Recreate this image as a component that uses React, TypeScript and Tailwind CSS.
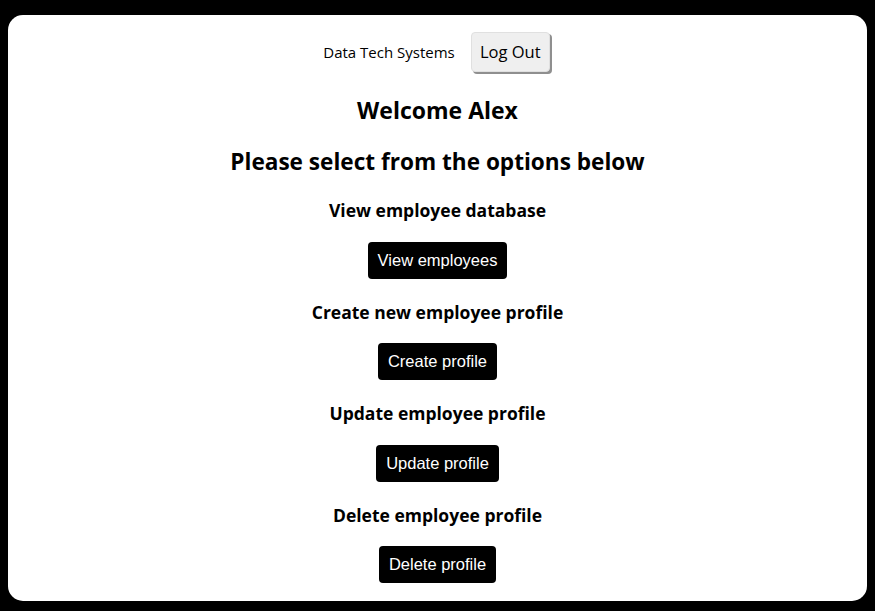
export default function App() {
  const options = [
    { title: 'View employee database', label: 'View employees' },
    { title: 'Create new employee profile', label: 'Create profile' },
    { title: 'Update employee profile', label: 'Update profile' },
    { title: 'Delete employee profile', label: 'Delete profile' },
  ]

  return (
    <div className="h-screen bg-black px-2 pt-[15px] pb-[10px] flex flex-col">
      <div className="flex-1 bg-white rounded-[15px] flex flex-col items-center text-black font-['Open_Sans',sans-serif]">
        <div className="flex items-center gap-4 pt-[17px] -ml-[2px]">
          <span className="text-[15px]">Data Tech Systems</span>
          <button className="w-[79px] h-10 rounded-[4px] bg-[#efefef] text-[16.5px] shadow-[2px_2px_0_#8f8f8f] border border-[#e0e0e0]">
            Log Out
          </button>
        </div>
        <h2 className="mt-[22px] text-[23px] leading-8 font-bold">Welcome Alex</h2>
        <h2 className="mt-[20px] text-[22.6px] leading-8 font-bold">Please select from the options below</h2>
        {options.map((o, i) => (
          <div key={o.title} className={`flex flex-col items-center ${i === 0 ? 'mt-5' : 'mt-[21px]'}`}>
            <h3 className="text-[17.5px] leading-6 font-bold">{o.title}</h3>
            <button className="mt-[19.5px] h-[37px] px-[10px] rounded-[4px] bg-black text-white text-[16.5px] font-['Liberation_Sans',Arial,sans-serif]">
              {o.label}
            </button>
          </div>
        ))}
      </div>
    </div>
  )
}
